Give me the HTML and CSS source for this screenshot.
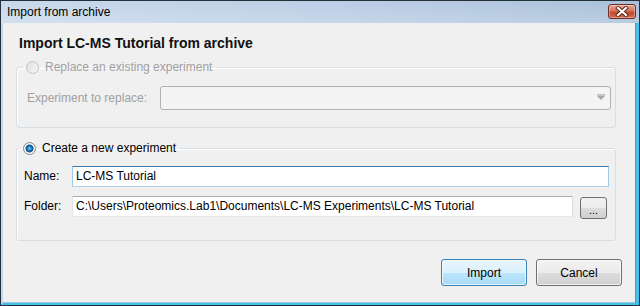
FILE: index.html
```html
<!DOCTYPE html>
<html lang="en">
<head>
    <meta charset="UTF-8">
    <title>Import from archive</title>
    <link rel="stylesheet" href="styles.css">
</head>
<body>

    <!-- Dialog window -->
    <div class="window">
        <div class="titlebar">
            <span class="title">Import from archive</span>
            <button class="close-btn" aria-label="Close">
                <svg width="14" height="11" viewBox="0 0 14 11">
                    <path d="M3 2 L11 9 M11 2 L3 9" stroke="#5a2418" stroke-width="4" stroke-linecap="square"/>
                    <path d="M3 2 L11 9 M11 2 L3 9" stroke="#ffffff" stroke-width="2.2" stroke-linecap="square"/>
                </svg>
            </button>
        </div>

        <div class="content">
            <h1>Import LC-MS Tutorial from archive</h1>

            <!-- Replace option (disabled) -->
            <fieldset class="group group-disabled">
                <legend>
                    <span class="radio radio-disabled"></span>
                    Replace an existing experiment
                </legend>
                <div class="row">
                    <label class="label-replace">Experiment to replace:</label>
                    <div class="combo">
                        <span class="combo-arrow"></span>
                    </div>
                </div>
            </fieldset>

            <!-- New experiment option -->
            <fieldset class="group group-new">
                <legend>
                    <span class="radio radio-checked"></span>
                    Create a new experiment
                </legend>
                <div class="row">
                    <label class="label-field">Name:</label>
                    <div class="input input-focus">LC-MS Tutorial</div>
                </div>
                <div class="row row-folder">
                    <label class="label-field">Folder:</label>
                    <div class="input">C:\Users\Proteomics.Lab1\Documents\LC-MS Experiments\LC-MS Tutorial</div>
                    <button class="browse-btn">...</button>
                </div>
            </fieldset>

            <div class="actions">
                <button class="btn btn-default">Import</button>
                <button class="btn">Cancel</button>
            </div>
        </div>
    </div>

</body>
</html>
```

FILE: styles.css
```css
/* Reset */
* {
    margin: 0;
    padding: 0;
    box-sizing: border-box;
}

body {
    font-family: "Liberation Sans", Arial, sans-serif;
    font-size: 12px;
    color: #000;
    background-color: #f0f0f0;
}

/* Window frame */
.window {
    width: 640px;
    height: 306px;
    border: 1px solid #26303a;
    display: flex;
    flex-direction: column;
    background-color: #f0f0f0;
}

.titlebar {
    height: 22px;
    display: flex;
    justify-content: space-between;
    align-items: center;
    padding: 0 3px 1px 6px;
    background:
        linear-gradient(to bottom, rgba(255,255,255,0.08), rgba(255,255,255,0.25)),
        linear-gradient(to right, #c4d6ea, #b3c9e2 55%, #a3bbd7);
}

.title {
    font-size: 12px;
    color: #000;
}

.close-btn {
    width: 28px;
    height: 15px;
    border: 1px solid #6e2c22;
    border-radius: 3px;
    display: flex;
    justify-content: center;
    align-items: center;
    background: linear-gradient(to bottom, #e9a89a 0%, #d7735f 45%, #c04a33 55%, #cf6a50 100%);
    box-shadow: inset 0 0 0 1px rgba(255,255,255,0.35);
}

.content {
    flex: 1;
    padding: 11px 14px 0 13px;
    border-left: 2px solid #c4d8ec;
    border-right: 3px solid #46c2ea;
    border-bottom: 2px solid #46c2ea;
    box-shadow: inset -1px 0 0 #6f8ba6, inset 0 -1px 0 #9fc6de;
}

h1 {
    font-size: 14px;
    line-height: 18px;
    font-weight: bold;
    color: #111;
    margin-left: 3px;
    margin-bottom: 7px;
}

/* Group boxes */
.group {
    width: 600px;
    border: 1px solid #d5dfe5;
    border-radius: 3px;
    box-shadow: inset 1px 1px 0 #fff;
}

.group-disabled {
    padding: 11px 4px 17px 10px;
    color: #a0a0a0;
}

.group-new {
    margin-top: 12px;
    padding: 10px 6px 21px 7px;
}

legend {
    line-height: 16px;
    margin-left: -4px;
    padding: 0 4px 0 3px;
    display: flex;
    align-items: center;
    gap: 6px;
}

.radio {
    width: 13px;
    height: 13px;
    border-radius: 50%;
    display: inline-block;
}

.radio-disabled {
    border: 1px solid #c4c4c4;
    background: linear-gradient(135deg, #e0e0e0, #f6f6f6);
}

.radio-checked {
    border: 1px solid #8a8c8e;
    background: radial-gradient(circle, #7fd0ff 0, #1f7fc4 2px, #0f4f88 3.5px, #ffffff 4.5px, #e4e4e4 6px);
}

.row {
    display: flex;
    align-items: center;
}

.label-replace {
    width: 133px;
}

.combo {
    width: 451px;
    height: 24px;
    border: 1px solid #adb2b5;
    border-radius: 3px;
    background-color: #f4f4f4;
    display: flex;
    justify-content: flex-end;
    align-items: center;
    padding-right: 5px;
}

.combo-arrow {
    width: 0;
    height: 0;
    border-left: 4px solid transparent;
    border-right: 4px solid transparent;
    border-top: 4px solid #a8a8a8;
    box-shadow: 0 -2px 0 0 #c4c4c4;
}

.label-field {
    width: 48px;
    line-height: 21px;
}

.input {
    flex: 1;
    height: 21px;
    line-height: 19px;
    padding: 0 3px;
    background-color: #fff;
    border: 1px solid #abadb3;
    border-color: #abadb3 #dbdfe6 #e3e9ef #e2e3ea;
    white-space: nowrap;
    overflow: hidden;
}

.input-focus {
    border-color: #3d7bad #a4c9e3 #b5cfe7 #a4c9e3;
}

.row-folder {
    margin-top: 9px;
    align-items: flex-start;
    padding-right: 2px;
}

.browse-btn {
    width: 27px;
    height: 22px;
    margin-top: 1px;
    margin-left: 7px;
    border: 1px solid #707070;
    border-radius: 3px;
    font-family: inherit;
    font-size: 11px;
    line-height: 14px;
    padding-top: 3px;
    background: linear-gradient(to bottom, #f2f2f2 0%, #ebebeb 50%, #dddddd 51%, #cfcfcf 100%);
}

/* Dialog buttons */
.actions {
    display: flex;
    justify-content: flex-end;
    gap: 9px;
    margin-top: 18px;
}

.btn {
    width: 86px;
    height: 27px;
    border: 1px solid #707070;
    border-radius: 3px;
    font-family: inherit;
    font-size: 12px;
    color: #000;
    background: linear-gradient(to bottom, #f2f2f2 0%, #ebebeb 50%, #dddddd 51%, #cfcfcf 100%);
    box-shadow: inset 0 0 0 1px rgba(255,255,255,0.7);
}

.btn-default {
    border-color: #3c7fb1;
    background: linear-gradient(to bottom, #eaf6fd 0%, #d9f0fc 50%, #bee6fd 51%, #a7d9f5 100%);
}
```
